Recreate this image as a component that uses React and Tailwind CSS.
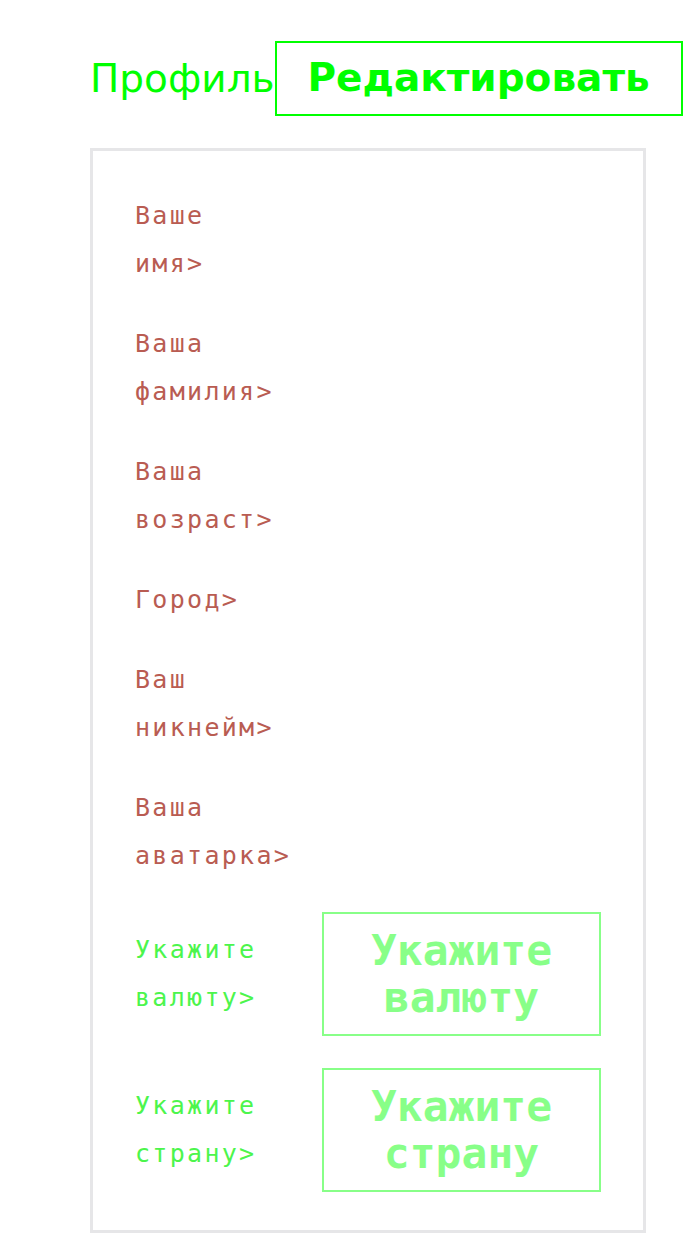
export default function App() {
  const labels = [
    "Ваше имя>",
    "Ваша фамилия>",
    "Ваша возраст>",
    "Город>",
    "Ваш никнейм>",
    "Ваша аватарка>",
  ];
  return (
    <div className="bg-white min-h-[1234px] w-[686px] overflow-hidden">
      <div className="flex items-center pl-[90px] pt-[41px] font-['DejaVu_Sans',sans-serif]">
        <span className="text-[39px] text-[#00ff00] leading-none">Профиль</span>
        <div className="w-[408px] h-[75px] border-2 border-[#00ff00] flex items-center justify-center text-[39px] font-bold text-[#00ff00]">
          Редактировать
        </div>
      </div>
      <div className="ml-[90px] mt-[32px] w-[556px] border-[3px] border-[#e6e6e8] pl-[42px] pr-[40px] pt-[41px] pb-[38px] flex flex-col gap-[32px] font-['DejaVu_Sans_Mono',monospace]">
        {labels.map((l) => (
          <div
            key={l}
            className="w-[150px] text-[25px] leading-[48px] tracking-[2.3px] text-[#b95c52]"
          >
            {l}
          </div>
        ))}
        {["валюту", "страну"].map((w) => (
          <div key={w} className="flex items-center">
            <div className="w-[187px] text-[25px] leading-[48px] tracking-[2.3px] text-[#4cf54c]">
              Укажите {w}&gt;
            </div>
            <div className="w-[279px] h-[124px] border-2 border-[#88ff88] flex items-center justify-center text-center text-[43px] leading-[47px] font-bold text-[#88ff88]">
              Укажите
              <br />
              {w}
            </div>
          </div>
        ))}
      </div>
    </div>
  );
}
